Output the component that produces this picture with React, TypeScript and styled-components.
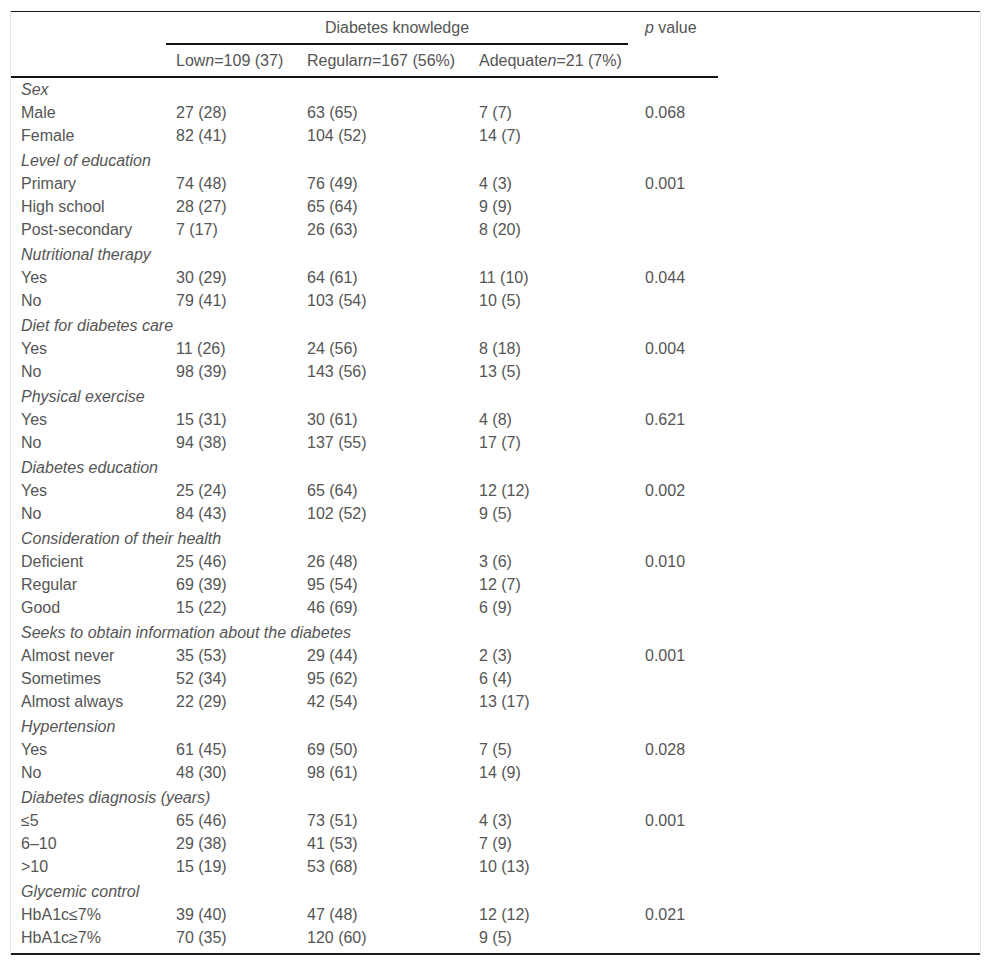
import styled, { createGlobalStyle } from "styled-components";

const GlobalStyle = createGlobalStyle`
    html, body {
        margin: 0;
        padding: 0;
        background: #FFFFFF;
    }
`

const Frame = styled.div`
    margin: 10px 11px 0 10px;
    padding-top: 1px;
    border-left: 1px solid #E6E6E6;
    border-right: 1px solid #E6E6E6;
`
const Inner = styled.div`
    border-top: 1px solid #1A1A1A;
    border-bottom: 2px solid #1A1A1A;
    padding-bottom: 4px;
`
const Table = styled.table`
    border-collapse: collapse;
    font-family: "Liberation Sans", Arial, sans-serif;
    font-size: 16px;
    line-height: 17px;
    color: #555555;
    table-layout: fixed;
`
const HeadCell = styled.th<{ $rule?: boolean }>`
    font-weight: 400;
    text-align: left;
    vertical-align: top;
    white-space: nowrap;
    padding: 7px 10px;
    border-bottom: ${(p) => (p.$rule ? "2px solid #111111" : "none")};
`
const GroupHead = styled.th`
    font-weight: 400;
    padding: 0 7px 0 0;
`
const GroupLabel = styled.div`
    text-align: center;
    padding: 7px 0;
    border-bottom: 2px solid #111111;
`
const Cell = styled.td<{ $gap?: boolean }>`
    padding: ${(p) => (p.$gap ? "5px" : "3px")} 10px 3px;
    white-space: nowrap;
    vertical-align: top;
`
const GroupCell = styled(Cell)`
    font-style: italic;
`

type Group = { name: string; rows: [string, string, string, string, string?][] };

const groups: Group[] = [
    { name: "Sex", rows: [["Male", "27 (28)", "63 (65)", "7 (7)", "0.068"], ["Female", "82 (41)", "104 (52)", "14 (7)"]] },
    { name: "Level of education", rows: [["Primary", "74 (48)", "76 (49)", "4 (3)", "0.001"], ["High school", "28 (27)", "65 (64)", "9 (9)"], ["Post-secondary", "7 (17)", "26 (63)", "8 (20)"]] },
    { name: "Nutritional therapy", rows: [["Yes", "30 (29)", "64 (61)", "11 (10)", "0.044"], ["No", "79 (41)", "103 (54)", "10 (5)"]] },
    { name: "Diet for diabetes care", rows: [["Yes", "11 (26)", "24 (56)", "8 (18)", "0.004"], ["No", "98 (39)", "143 (56)", "13 (5)"]] },
    { name: "Physical exercise", rows: [["Yes", "15 (31)", "30 (61)", "4 (8)", "0.621"], ["No", "94 (38)", "137 (55)", "17 (7)"]] },
    { name: "Diabetes education", rows: [["Yes", "25 (24)", "65 (64)", "12 (12)", "0.002"], ["No", "84 (43)", "102 (52)", "9 (5)"]] },
    { name: "Consideration of their health", rows: [["Deficient", "25 (46)", "26 (48)", "3 (6)", "0.010"], ["Regular", "69 (39)", "95 (54)", "12 (7)"], ["Good", "15 (22)", "46 (69)", "6 (9)"]] },
    { name: "Seeks to obtain information about the diabetes", rows: [["Almost never", "35 (53)", "29 (44)", "2 (3)", "0.001"], ["Sometimes", "52 (34)", "95 (62)", "6 (4)"], ["Almost always", "22 (29)", "42 (54)", "13 (17)"]] },
    { name: "Hypertension", rows: [["Yes", "61 (45)", "69 (50)", "7 (5)", "0.028"], ["No", "48 (30)", "98 (61)", "14 (9)"]] },
    { name: "Diabetes diagnosis (years)", rows: [["≤5", "65 (46)", "73 (51)", "4 (3)", "0.001"], ["6–10", "29 (38)", "41 (53)", "7 (9)"], [">10", "15 (19)", "53 (68)", "10 (13)"]] },
    { name: "Glycemic control", rows: [["HbA1c≤7%", "39 (40)", "47 (48)", "12 (12)", "0.021"], ["HbA1c≥7%", "70 (35)", "120 (60)", "9 (5)"]] },
];

export default function App() {
    return (
        <>
            <GlobalStyle />
            <Frame>
                <Inner>
                    <Table>
                        <colgroup>
                            <col style={{ width: 155 }} />
                            <col style={{ width: 131 }} />
                            <col style={{ width: 172 }} />
                            <col style={{ width: 166 }} />
                            <col style={{ width: 83 }} />
                        </colgroup>
                        <thead>
                            <tr>
                                <HeadCell rowSpan={2} $rule />
                                <GroupHead colSpan={3}>
                                    <GroupLabel>Diabetes knowledge</GroupLabel>
                                </GroupHead>
                                <HeadCell rowSpan={2} $rule><i>p</i> value</HeadCell>
                            </tr>
                            <tr>
                                <HeadCell $rule>Low<i>n</i>=109 (37)</HeadCell>
                                <HeadCell $rule>Regular<i>n</i>=167 (56%)</HeadCell>
                                <HeadCell $rule>Adequate<i>n</i>=21 (7%)</HeadCell>
                            </tr>
                        </thead>
                        <tbody>
                            {groups.map((g, gi) => [
                                <tr key={g.name}>
                                    <GroupCell colSpan={5} $gap={gi > 0}>{g.name}</GroupCell>
                                </tr>,
                                ...g.rows.map((r, ri) => (
                                    <tr key={g.name + ri}>
                                        <Cell>{r[0]}</Cell>
                                        <Cell>{r[1]}</Cell>
                                        <Cell>{r[2]}</Cell>
                                        <Cell>{r[3]}</Cell>
                                        <Cell>{r[4] ?? ""}</Cell>
                                    </tr>
                                )),
                            ])}
                        </tbody>
                    </Table>
                </Inner>
            </Frame>
        </>
    );
}
